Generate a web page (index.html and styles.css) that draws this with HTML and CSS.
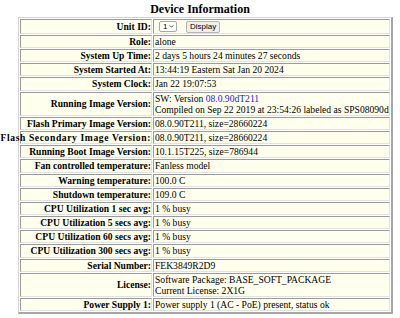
FILE: index.html
```html
<!DOCTYPE html>
<html lang="en">
<head>
    <meta charset="UTF-8">
    <meta name="viewport" content="width=device-width, initial-scale=1.0">
    <title>Device Information</title>
    <link rel="stylesheet" href="styles.css">
</head>
<body>
    <h1>Device Information</h1>

    <table class="info">
        <tr>
            <th><div class="label">Unit ID:</div></th>
            <td>
                <div class="unit-controls">
                    <span class="select-wrap">
                        <select class="unit-select"><option>1</option></select>
                        <svg class="chevron" viewBox="0 0 6 4"><path d="M0.6 0.6 L3 3 L5.4 0.6" fill="none" stroke="#222" stroke-width="1"/></svg>
                    </span>
                    <button class="display-btn">Display</button>
                </div>
            </td>
        </tr>
        <tr><th><div class="label">Role:</div></th><td>alone</td></tr>
        <tr><th><div class="label">System Up Time:</div></th><td>2 days 5 hours 24 minutes 27 seconds</td></tr>
        <tr><th><div class="label">System Started At:</div></th><td>13:44:19 Eastern Sat Jan 20 2024</td></tr>
        <tr><th><div class="label">System Clock:</div></th><td>Jan 22 19:07:53</td></tr>
        <tr>
            <th><div class="label">Running Image Version:</div></th>
            <td>SW: Version <a href="#">08.0.90dT211</a><br>Compiled on Sep 22 2019 at 23:54:26 labeled as SPS08090d</td>
        </tr>
        <tr><th><div class="label">Flash Primary Image Version:</div></th><td>08.0.90T211, size=28660224</td></tr>
        <tr><th><div class="label wide">Flash Secondary Image Version:</div></th><td>08.0.90T211, size=28660224</td></tr>
        <tr><th><div class="label">Running Boot Image Version:</div></th><td>10.1.15T225, size=786944</td></tr>
        <tr><th><div class="label">Fan controlled temperature:</div></th><td>Fanless model</td></tr>
        <tr><th><div class="label">Warning temperature:</div></th><td>100.0 C</td></tr>
        <tr><th><div class="label">Shutdown temperature:</div></th><td>109.0 C</td></tr>
        <tr><th><div class="label">CPU Utilization 1 sec avg:</div></th><td>1 % busy</td></tr>
        <tr><th><div class="label">CPU Utilization 5 secs avg:</div></th><td>1 % busy</td></tr>
        <tr><th><div class="label">CPU Utilization 60 secs avg:</div></th><td>1 % busy</td></tr>
        <tr><th><div class="label">CPU Utilization 300 secs avg:</div></th><td>1 % busy</td></tr>
        <tr><th><div class="label">Serial Number:</div></th><td>FEK3849R2D9</td></tr>
        <tr>
            <th><div class="label">License:</div></th>
            <td>Software Package: BASE_SOFT_PACKAGE<br>Current License: 2X1G</td>
        </tr>
        <tr><th><div class="label">Power Supply 1:</div></th><td>Power supply 1 (AC - PoE) present, status ok</td></tr>
    </table>
</body>
</html>
```

FILE: styles.css
```css
body {
    margin: 0;
    font-family: "Liberation Serif", "Times New Roman", serif;
    font-size: 9.6px;
    color: #000;
    background: #fff;
}
h1 {
    font-size: 12px;
    line-height: 15px;
    margin: 2px 0 0;
    text-align: center;
}
.info {
    margin-left: 18px;
    table-layout: fixed;
    width: 375px;
    border-collapse: separate;
    border-spacing: 1px;
    border-style: solid;
    border-width: 1px 2px 2px 1px;
    border-color: #d4d4d4 #a6a6a6 #a6a6a6 #d4d4d4;
}
.info th,
.info td {
    padding: 0 0 0 1px;
    line-height: 11.15px;
    background: #ffffee;
    border: 1px solid;
    border-color: #9a9a9a #e2e2e2 #e2e2e2 #9a9a9a;
    white-space: nowrap;
    vertical-align: middle;
}
.info th {
    width: 130px;
    padding: 0;
    text-align: right;
    font-weight: bold;
}
.label {
    display: flex;
    justify-content: flex-end;
}
.label.wide {
    letter-spacing: 0.6px;
}
.info a {
    color: #1a1aee;
    text-decoration: none;
}
.unit-controls {
    display: flex;
    align-items: center;
    gap: 9px;
    height: 13px;
    padding-left: 4px;
}
.select-wrap {
    position: relative;
    display: inline-block;
    height: 11px;
}
.unit-select {
    appearance: none;
    width: 18px;
    height: 11px;
    margin: 0;
    padding: 0 0 0 3px;
    border: 1px solid #a8a8a8;
    border-radius: 2px;
    background: #fff;
    color: #000;
    font: 8px "Liberation Sans", Arial, sans-serif;
    line-height: 9px;
    display: block;
}
.chevron {
    position: absolute;
    right: 3px;
    top: 4px;
    width: 5px;
    height: 3px;
    pointer-events: none;
}
.display-btn {
    height: 12px;
    margin: 0;
    padding: 0 3px;
    border: 1px solid #b5b5b5;
    border-radius: 2px;
    background: #efefef;
    color: #000;
    font: 8px "Liberation Sans", Arial, sans-serif;
    line-height: 10px;
}
```
